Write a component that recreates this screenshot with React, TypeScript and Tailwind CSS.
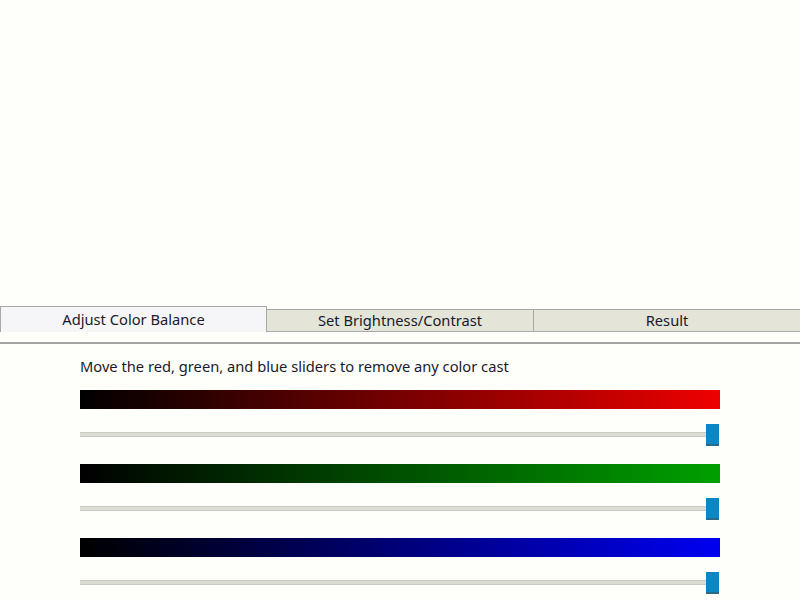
import React from "react";

const tabs = ["Adjust Color Balance", "Set Brightness/Contrast", "Result"];

const bars = [
  "bg-[linear-gradient(to_right,#000000,#ee0000)]",
  "bg-[linear-gradient(to_right,#000000,#00a000)]",
  "bg-[linear-gradient(to_right,#000000,#0000f0)]",
];

function Slider() {
  return (
    <div className="relative h-[22px] mt-[15px]">
      <div className="absolute left-0 right-[14px] top-[8px] h-[5px] bg-[#dcdcd2] border-y border-[#c9c9c4]" />
      <div className="absolute right-[1px] top-0 w-[13px] h-[22px] bg-[#0c87c6] border-b-2 border-[#2a6a88]" />
    </div>
  );
}

export default function App() {
  return (
    <div className="w-[800px] h-[600px] bg-[#fefefa] overflow-hidden" style={{ fontFamily: '"Noto Sans", "Open Sans", sans-serif' }}>
      <div className="h-[306px]" />

      {/* Tabs */}
      <div className="flex items-end h-[26px]">
        {tabs.map((t, i) =>
          i === 0 ? (
            <div key={t} className="w-[267px] h-[26px] flex items-center justify-center text-[14.7px] text-[#1a1a2a] bg-[#f6f6f8] border border-[#a8a8a8] border-b-0">
              {t}
            </div>
          ) : (
            <div key={t} className={"flex-1 h-[23px] flex items-center justify-center text-[14.7px] text-[#1a1a2a] bg-[#e4e4d8] border border-[#a8a8a8] border-l-0 " + (i === 2 ? "border-r-0" : "")}>
              {t}
            </div>
          )
        )}
      </div>
      <div className="h-[10px]" />
      <div className="h-[2px] bg-[#a4a4a4]" />

      {/* Content */}
      <div className="pl-[80px] w-[720px]">
        <div className="mt-[12px] text-[14.7px] leading-[20px] text-[#1a1a2a]">
          Move the red, green, and blue sliders to remove any color cast
        </div>
        {bars.map((b, i) => (
          <div key={i} className={i === 0 ? "mt-[14px]" : "mt-[18px]"}>
            <div className={"h-[19px] " + b} />
            <Slider />
          </div>
        ))}
      </div>
    </div>
  );
}
